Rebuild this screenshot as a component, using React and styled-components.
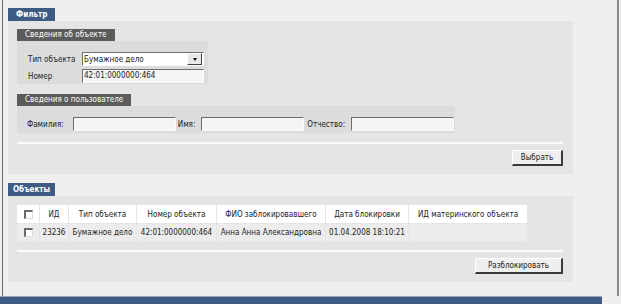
import React from "react"
import styled, { createGlobalStyle } from "styled-components"

const Global = createGlobalStyle`
  html, body {
    margin: 0;
    padding: 0;
    background: #f1efed;
  }
  body {
    font-family: "DejaVu Sans Condensed", "DejaVu Sans", sans-serif;
    font-stretch: condensed;
    font-size: 8px;
    color: #222;
  }
`

const Frame = styled.div`
  width: 621px;
  height: 304px;
  overflow: hidden;
  display: flex;
  flex-direction: column;
`

const Content = styled.div`
  margin-left: 2px;
  width: 617px;
  height: 296px;
  border-left: 1px solid #6a6a6a;
  border-right: 2px solid #8a8a8a;
  box-sizing: border-box;
  padding: 8px 0 0 5px;
  display: flex;
  flex-direction: column;
`

const Tab = styled.div`
  align-self: flex-start;
  background: ${props => (props.dark ? "#5b5b5b" : "#3d5b83")};
  color: #fff;
  font-weight: ${props => (props.dark ? "normal" : "bold")};
  height: ${props => (props.dark ? "12px" : "13px")};
  line-height: ${props => (props.dark ? "12px" : "13px")};
  padding: 0 ${props => props.pad || 8}px;
  white-space: nowrap;
`

const Panel = styled.div`
  width: 565px;
  background: #e5e5e5;
  box-sizing: border-box;
  padding: ${props => props.pad};
  margin-bottom: ${props => props.mb || 0}px;
  display: flex;
  flex-direction: column;
`

const Box = styled.div`
  width: ${props => props.w}px;
  background: #dcdcdc;
  box-sizing: border-box;
  padding: ${props => props.pad};
  display: ${props => (props.grid ? "grid" : "flex")};
  grid-template-columns: 54px 122px;
  row-gap: 3px;
  align-items: center;
  margin-bottom: ${props => props.mb || 0}px;
`

const Label = styled.span`
  white-space: nowrap;
  margin-right: ${props => props.mr || 0}px;
`

const Input = styled.div`
  width: ${props => props.w}px;
  height: 14px;
  box-sizing: border-box;
  background: #f5f5f5;
  border-top: 1px solid #6e6e6e;
  border-left: 1px solid #6e6e6e;
  border-right: 1px solid #fafafa;
  border-bottom: 1px solid #fafafa;
  line-height: 12px;
  padding-left: 1px;
  margin-right: ${props => props.mr || 0}px;
  white-space: nowrap;
`

const Select = styled.div`
  width: 122px;
  height: 14px;
  box-sizing: border-box;
  background: #fff;
  border-top: 1px solid #6e6e6e;
  border-left: 1px solid #6e6e6e;
  border-right: 1px solid #fafafa;
  border-bottom: 1px solid #fafafa;
  display: flex;
  align-items: center;
  justify-content: space-between;
  padding-left: 1px;
`

const SelectBtn = styled.div`
  width: 13px;
  height: 10px;
  margin-right: 1px;
  background: #e8e8e8;
  border-top: 1px solid #fff;
  border-left: 1px solid #fff;
  border-right: 1px solid #404040;
  border-bottom: 1px solid #404040;
  display: flex;
  align-items: center;
  justify-content: center;
  &::after {
    content: "";
    border-left: 2px solid transparent;
    border-right: 2px solid transparent;
    border-top: 3px solid #000;
  }
`

const Divider = styled.div`
  width: 546px;
  height: 2px;
  background: #fbfbfb;
  margin: ${props => props.m};
`

const ButtonRow = styled.div`
  width: 546px;
  display: flex;
  justify-content: flex-end;
`

const Button = styled.div`
  width: ${props => props.w}px;
  height: 16px;
  box-sizing: border-box;
  background: #efefef;
  border-top: 1px solid #fff;
  border-left: 1px solid #fff;
  border-right: 2px solid #3a3a3a;
  border-bottom: 2px solid #3a3a3a;
  text-align: center;
  line-height: 13px;
`

const Table = styled.div`
  display: grid;
  grid-template-columns: 22px 28px 67px 79px 108px 82px 118px;
  column-gap: 1px;
  row-gap: 1px;
  width: 510px;
`

const HeadCell = styled.div`
  background: #fff;
  height: 18px;
  white-space: nowrap;
  display: flex;
  align-items: center;
  justify-content: center;
`

const Cell = styled.div`
  background: #ececec;
  height: 17px;
  white-space: nowrap;
  display: flex;
  align-items: center;
  justify-content: center;
`

const Check = styled.div`
  width: 9px;
  height: 9px;
  box-sizing: border-box;
  background: #fff;
  border-top: 2px solid #6a6a6a;
  border-left: 2px solid #6a6a6a;
  border-right: 1px solid #dcdcdc;
  border-bottom: 1px solid #dcdcdc;
`

const BottomBar = styled.div`
  width: 602px;
  height: 8px;
  background: #3d5b83;
  border-top: 1px solid #9aa6b8;
  box-sizing: border-box;
`

const headers = [
  "ИД",
  "Тип объекта",
  "Номер объекта",
  "ФИО заблокировавшего",
  "Дата блокировки",
  "ИД материнского объекта",
]

const row = [
  "23236",
  "Бумажное дело",
  "42:01:0000000:464",
  "Анна Анна Александровна",
  "01.04.2008 18:10:21",
  "",
]

export default function App() {
  return (
    <Frame>
      <Global />
      <Content>
        <Tab>Фильтр</Tab>
        <Panel pad="8px 0 8px 9px" mb={9}>
          <Tab dark>Сведения об объекте</Tab>
          <Box grid w={191} pad="11px 0 1px 11px" mb={10}>
            <Label>Тип объекта</Label>
            <Select>
              <span>Бумажное дело</span>
              <SelectBtn />
            </Select>
            <Label>Номер</Label>
            <Input w={122}>42:01:0000000:464</Input>
          </Box>
          <Tab dark>Сведения о пользователе</Tab>
          <Box w={438} pad="11px 0 2px 10px">
            <Label mr={9}>Фамилия:</Label>
            <Input w={103} mr={2}>&nbsp;</Input>
            <Label mr={6}>Имя:</Label>
            <Input w={103} mr={3}>&nbsp;</Input>
            <Label mr={6}>Отчество:</Label>
            <Input w={103}>&nbsp;</Input>
          </Box>
          <Divider m="9px 0 6px" />
          <ButtonRow>
            <Button w={51}>Выбрать</Button>
          </ButtonRow>
        </Panel>
        <Tab pad={5}>Объекты</Tab>
        <Panel pad="9px 0 8px 9px">
          <Table>
            <HeadCell><Check /></HeadCell>
            {headers.map(h => (
              <HeadCell key={h}>{h}</HeadCell>
            ))}
            <Cell><Check /></Cell>
            {row.map((c, i) => (
              <Cell key={i}>{c}</Cell>
            ))}
          </Table>
          <Divider m="9px 0 6px" />
          <ButtonRow>
            <Button w={88}>Разблокировать</Button>
          </ButtonRow>
        </Panel>
      </Content>
      <BottomBar />
    </Frame>
  )
}
